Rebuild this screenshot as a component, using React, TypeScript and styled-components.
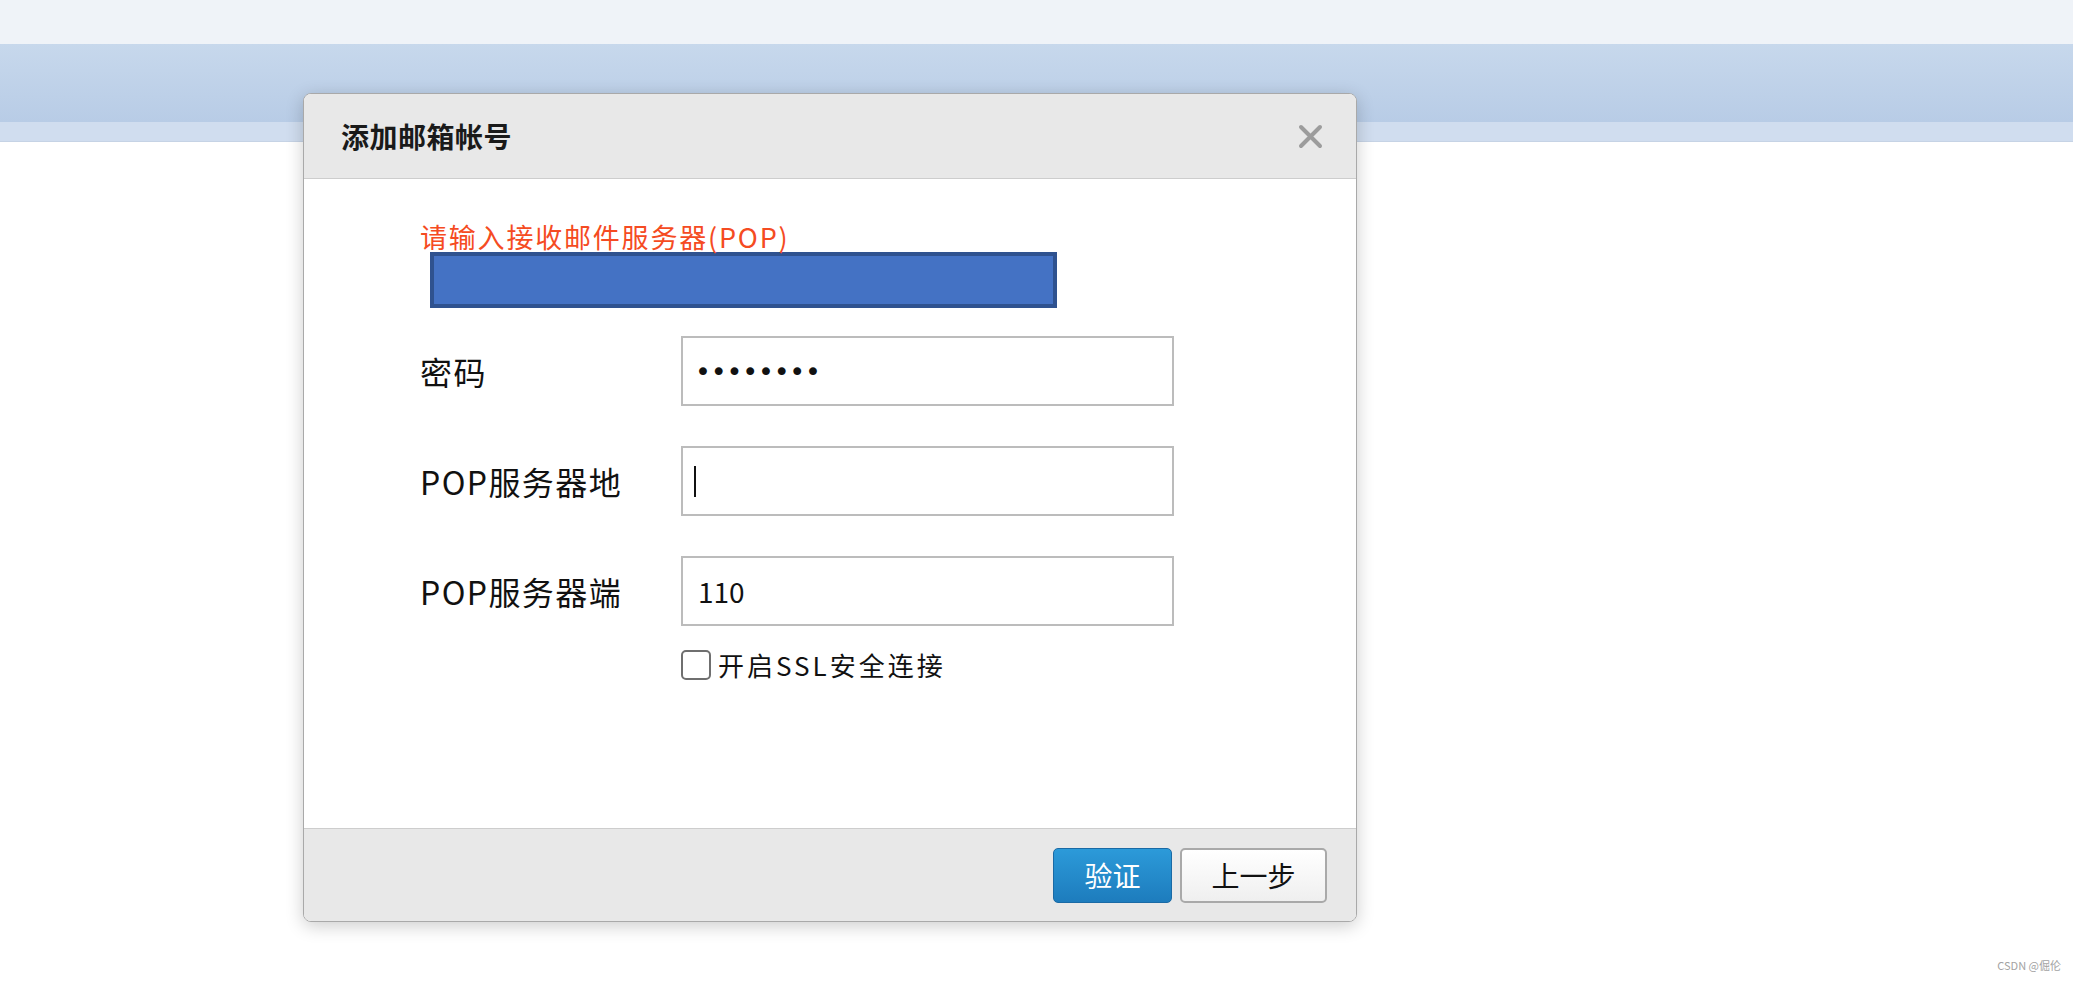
import React from "react";
import styled, { createGlobalStyle } from "styled-components";

const GlobalStyle = createGlobalStyle`
  html, body {
    margin: 0;
    padding: 0;
    background: #ffffff;
  }
  body {
    font-family: "Noto Sans CJK SC", "Noto Sans", sans-serif;
    color: #111;
  }
  * { box-sizing: border-box; }
`;

const Page = styled.div`
  position: relative;
  width: 100%;
  height: 981px;
  overflow: hidden;
  background: #ffffff;
`;

const TopBar = styled.div`
  height: 44px;
  background: #eff3f8;
`;

const NavBand = styled.div`
  height: 78px;
  background: linear-gradient(#c7d8ec, #b8cce6);
`;

const SubBand = styled.div`
  height: 20px;
  background: #d0ddef;
  border-bottom: 1px solid #c6d3e5;
`;

const Dialog = styled.div`
  position: absolute;
  left: 303px;
  top: 93px;
  width: 1054px;
  height: 829px;
  display: flex;
  flex-direction: column;
  background: #ffffff;
  border: 1px solid #a9a9a9;
  border-radius: 8px;
  box-shadow: 0 4px 18px rgba(0, 0, 0, 0.2);
  overflow: hidden;
`;

const Header = styled.div`
  height: 85px;
  flex: none;
  display: flex;
  align-items: center;
  justify-content: space-between;
  padding: 0 33px 0 37px;
  background: #e8e8e8;
  border-bottom: 1px solid #cdcdcd;
`;

const Title = styled.div`
  font-size: 28px;
  font-weight: 700;
  letter-spacing: 0.5px;
  color: #1a1a1a;
`;

const CloseButton = styled.div`
  width: 25px;
  height: 25px;
  display: flex;
`;

const Body = styled.div`
  flex: 1;
  padding: 43px 0 0 116px;
`;

const Hint = styled.div`
  font-size: 27px;
  line-height: 30px;
  letter-spacing: 1.8px;
  color: #f54b22;
`;

const Redacted = styled.div`
  margin-left: 10px;
  width: 627px;
  height: 56px;
  background: #4472c4;
  border: 4px solid #2f528f;
`;

const Form = styled.div`
  margin-top: 28px;
  display: grid;
  grid-template-columns: 261px 493px;
  row-gap: 40px;
  align-items: center;
`;

const Label = styled.div`
  font-size: 32px;
  letter-spacing: 1.4px;
  color: #111;
`;

const Field = styled.div`
  height: 70px;
  display: flex;
  align-items: center;
  padding-left: 15px;
  border: 2px solid #bcbcbc;
  background: #ffffff;
  font-size: 28px;
  color: #111;
`;

const Dots = styled.span`
  margin-left: -3px;
  font-family: "DejaVu Sans", sans-serif;
  font-size: 27px;
  letter-spacing: -0.2px;
`;

const Caret = styled.span`
  margin-left: -4px;
  width: 2px;
  height: 31px;
  background: #111;
`;

const CheckRow = styled.label`
  margin: 20px 0 0 261px;
  display: flex;
  align-items: center;
  gap: 7px;
  font-size: 26px;
  letter-spacing: 3px;
  color: #111;
`;

const CheckBox = styled.span`
  width: 30px;
  height: 30px;
  border: 2px solid #6f6f6f;
  border-radius: 5px;
  background: #ffffff;
`;

const Footer = styled.div`
  height: 93px;
  flex: none;
  display: flex;
  align-items: center;
  justify-content: flex-end;
  gap: 8px;
  padding-right: 29px;
  background: #e8e8e8;
  border-top: 1px solid #cdcdcd;
`;

const Button = styled.button<{ $primary?: boolean }>`
  height: 55px;
  width: ${(p) => (p.$primary ? "119px" : "147px")};
  padding: 0;
  border-radius: 5px;
  font-family: "Noto Sans CJK SC", sans-serif;
  font-size: 28px;
  color: ${(p) => (p.$primary ? "#ffffff" : "#111111")};
  background: ${(p) =>
    p.$primary
      ? "linear-gradient(#2c9ad9, #1d7cbd)"
      : "linear-gradient(#ffffff, #efefef)"};
  border: ${(p) => (p.$primary ? "1px solid #1a6aa5" : "2px solid #a9a9a9")};
  cursor: pointer;
`;

const Watermark = styled.div`
  position: absolute;
  right: 12px;
  bottom: 8px;
  font-size: 11px;
  color: #a3a3a3;
`;

export default function App() {
  return (
    <Page>
      <GlobalStyle />
      <TopBar />
      <NavBand />
      <SubBand />
      <Dialog>
        <Header>
          <Title>添加邮箱帐号</Title>
          <CloseButton>
            <svg width="25" height="25" viewBox="0 0 25 25">
              <path
                d="M3 3 L22 22 M22 3 L3 22"
                stroke="#9c9c9c"
                strokeWidth="4"
                strokeLinecap="round"
              />
            </svg>
          </CloseButton>
        </Header>
        <Body>
          <Hint>请输入接收邮件服务器(POP)</Hint>
          <Redacted />
          <Form>
            <Label>密码</Label>
            <Field>
              <Dots>••••••••</Dots>
            </Field>
            <Label>POP服务器地</Label>
            <Field>
              <Caret />
            </Field>
            <Label>POP服务器端</Label>
            <Field>110</Field>
          </Form>
          <CheckRow>
            <CheckBox />
            开启SSL安全连接
          </CheckRow>
        </Body>
        <Footer>
          <Button $primary>验证</Button>
          <Button>上一步</Button>
        </Footer>
      </Dialog>
      <Watermark>CSDN @倔伦</Watermark>
    </Page>
  );
}
